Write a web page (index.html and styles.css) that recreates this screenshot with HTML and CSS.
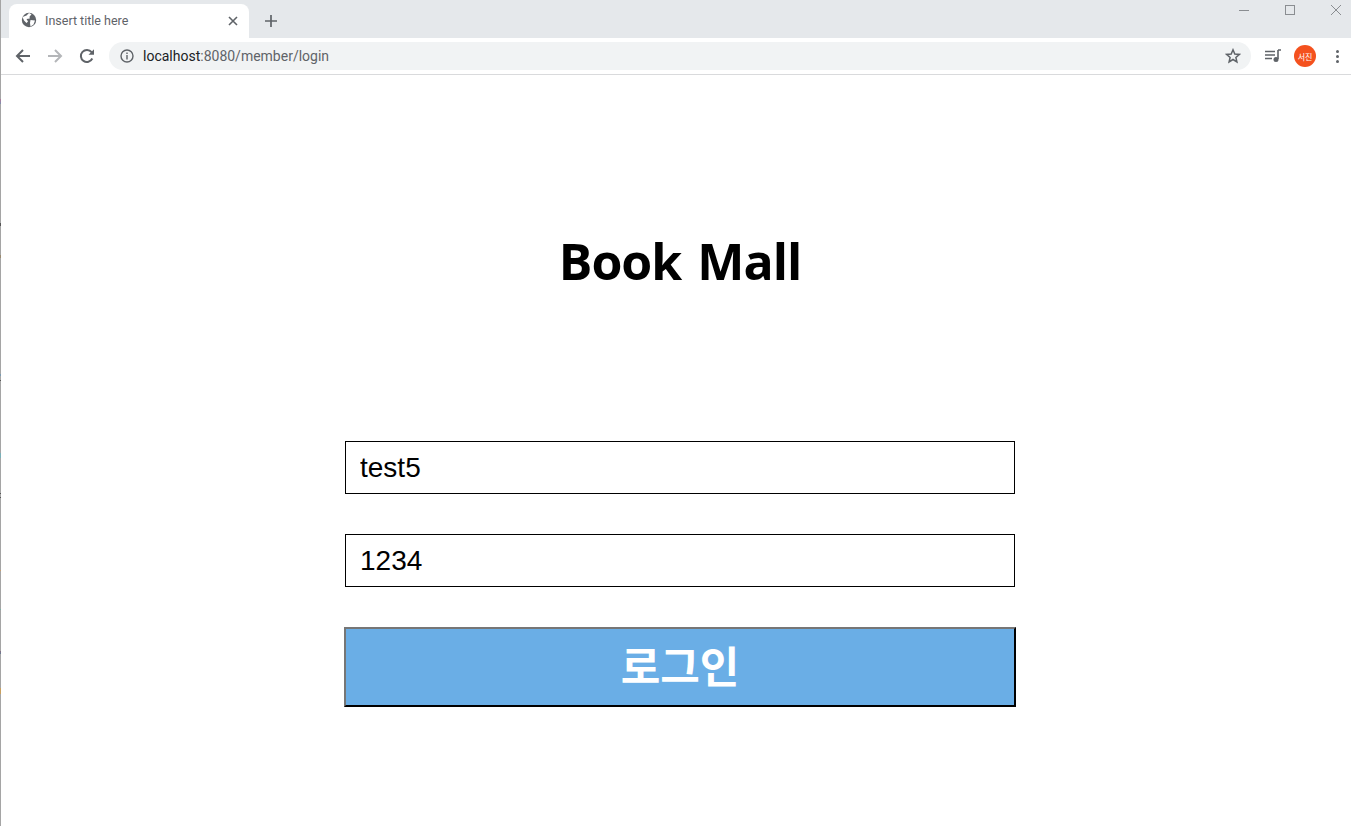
FILE: index.html
```html
<!DOCTYPE html>
<html lang="ko">
<head>
    <meta charset="UTF-8">
    <title>Insert title here</title>
    <link rel="stylesheet" href="styles.css">
</head>
<body>
    <div class="tabstrip">
        <div class="tab">
            <svg class="favicon" width="16" height="16" viewBox="0 0 16 16">
                <circle cx="8" cy="8" r="7.2" fill="#5f6368"/>
                <path d="M1.5 5 L5.5 3.5 L8 1 L10.5 2.2 L8.5 4.8 L8.8 6.6 L5.5 7 L7 9.5 L5.5 11 L3 8.5 Z M9.5 8 L14 8.5 L12.5 12.5 L9.5 14.5 L9 11 Z" fill="#fff"/>
            </svg>
            <span class="tab-title">Insert title here</span>
            <svg class="tab-close" width="10" height="10" viewBox="0 0 10 10">
                <path d="M1 1 L9 9 M9 1 L1 9" stroke="#5f6368" stroke-width="1.6"/>
            </svg>
        </div>
        <svg class="new-tab" width="12" height="12" viewBox="0 0 12 12">
            <path d="M6 0 V12 M0 6 H12" stroke="#5f6368" stroke-width="1.7"/>
        </svg>
        <div class="window-btns">
            <svg width="12" height="12" viewBox="0 0 12 12"><path d="M1 6.5 H11" stroke="#8a8d91"/></svg>
            <svg width="12" height="12" viewBox="0 0 12 12"><rect x="1.5" y="1.5" width="9" height="9" fill="none" stroke="#8a8d91"/></svg>
            <svg width="12" height="12" viewBox="0 0 12 12"><path d="M1 1 L11 11 M11 1 L1 11" stroke="#8a8d91"/></svg>
        </div>
    </div>

    <div class="toolbar">
        <svg class="nav-icon" width="16" height="16" viewBox="0 0 16 16">
            <path d="M15 8 H2 M8 2 L2 8 L8 14" fill="none" stroke="#5f6368" stroke-width="2"/>
        </svg>
        <svg class="nav-icon" width="16" height="16" viewBox="0 0 16 16">
            <path d="M1 8 H14 M8 2 L14 8 L8 14" fill="none" stroke="#b4b6b9" stroke-width="2"/>
        </svg>
        <svg class="nav-icon" width="16" height="16" viewBox="0 0 16 16">
            <path d="M13.3 10.5 A6 6 0 1 1 12.6 4.2" fill="none" stroke="#5f6368" stroke-width="2"/>
            <path d="M9.5 6.8 H15 V1.3 Z" fill="#5f6368"/>
        </svg>
        <div class="omnibox">
            <svg class="info-icon" width="14" height="14" viewBox="0 0 14 14">
                <circle cx="7" cy="7" r="6" fill="none" stroke="#5f6368" stroke-width="1.4"/>
                <path d="M7 6 V10.4 M7 3.6 V5" stroke="#5f6368" stroke-width="1.4"/>
            </svg>
            <span class="url"><span class="url-host">localhost</span>:8080/member/login</span>
            <svg class="star" width="16" height="16" viewBox="0 0 16 16">
                <path d="M8 1.8 L9.8 6 L14.3 6.4 L10.9 9.4 L11.9 13.9 L8 11.5 L4.1 13.9 L5.1 9.4 L1.7 6.4 L6.2 6 Z" fill="none" stroke="#5f6368" stroke-width="1.5"/>
            </svg>
        </div>
        <svg class="media-icon" width="16" height="14" viewBox="0 0 16 14">
            <path d="M0 2.5 H10 M0 6 H10 M0 9.5 H7" stroke="#5f6368" stroke-width="1.4"/>
            <path d="M13 1 H16 M13 1 V10" stroke="#5f6368" stroke-width="1.6"/>
            <circle cx="11" cy="10.5" r="2.5" fill="#5f6368"/>
        </svg>
        <div class="avatar">서진</div>
        <div class="menu-dots"><i></i><i></i><i></i></div>
    </div>

    <div class="login">
        <h1 class="title">Book Mall</h1>
        <form class="login-form">
            <input class="input" type="text" value="test5">
            <input class="input" type="text" value="1234">
            <button class="button" type="button">로그인</button>
        </form>
    </div>
</body>
</html>
```

FILE: styles.css
```css
* {
    margin: 0;
    padding: 0;
    box-sizing: border-box;
}
html, body {
    height: 100%;
    overflow: hidden;
}
body {
    font-family: "Liberation Sans", Arial, sans-serif;
    background-color: #ffffff;
    border-left: 1px solid #a5a5a5;
    /* bits of the window behind showing at the edge */
    border-image: linear-gradient(#a5a5a5 100px, #b07a9a 100px, #7a8fb0 105px, #a5a5a5 105px,
        #a5a5a5 223px, #555 223px, #555 226px, #a5a5a5 226px,
        #a5a5a5 255px, #9a8a70 255px, #9a8a70 258px, #a5a5a5 258px,
        #a5a5a5 374px, #7a9ab0 374px, #7a9ab0 376px, #a5a5a5 376px,
        #a5a5a5 380px, #555 380px, #555 381px, #a5a5a5 381px,
        #a5a5a5 453px, #7ab0b8 453px, #7ab0b8 458px, #a5a5a5 458px,
        #a5a5a5 493px, #555 493px, #555 494px, #a5a5a5 494px,
        #a5a5a5 497px, #555 497px, #555 498px, #a5a5a5 498px,
        #a5a5a5 570px, #c9a070 570px, #c9a070 571px, #a5a5a5 571px,
        #a5a5a5 609px, #7ab0a8 609px, #7ab0a8 610px, #a5a5a5 610px,
        #a5a5a5 650px, #8a6a80 650px, #6a7a90 653px, #a5a5a5 653px,
        #a5a5a5 687px, #c9a060 687px, #c9a060 693px, #a5a5a5 693px) 1;
}

/* browser top */
.tabstrip {
    height: 38px;
    background-color: #e5e8eb;
    display: flex;
    align-items: flex-end;
    padding-left: 8px;
}
.tab {
    width: 240px;
    height: 34px;
    background-color: #ffffff;
    border-radius: 8px 8px 0 0;
    display: flex;
    align-items: center;
    padding: 0 11px 0 12px;
}
.tab-title {
    flex: 1;
    margin-left: 8px;
    margin-bottom: 2px;
    font-family: Roboto, sans-serif;
    font-size: 12.5px;
    color: #5f6368;
}
.favicon {
    margin-bottom: 3px;
}
.tab-close {
    margin-bottom: 1px;
}
.new-tab {
    margin: 0 0 11px 16px;
}
.window-btns {
    margin-left: auto;
    align-self: flex-start;
    display: flex;
    gap: 34px;
    padding: 4px 9px 0 0;
}

.toolbar {
    height: 37px;
    background-color: #ffffff;
    border-bottom: 1px solid #d9dadc;
    display: flex;
    align-items: center;
    padding-left: 14px;
}
.nav-icon {
    margin-right: 16px;
}
.omnibox {
    width: 1142px;
    height: 28px;
    margin-left: -2px;
    background-color: #f1f3f4;
    border-radius: 14px;
    display: flex;
    align-items: center;
    padding: 0 10px 0 11px;
}
.info-icon {
    flex: none;
}
.url {
    flex: 1;
    margin-left: 9px;
    font-family: Roboto, sans-serif;
    font-size: 14px;
    color: #5f6368;
}
.url-host {
    color: #202124;
}
.media-icon {
    margin-left: 14px;
}
.avatar {
    width: 22px;
    height: 22px;
    margin-left: 13px;
    border-radius: 50%;
    background-color: #f4511e;
    color: #ffffff;
    font-family: "Noto Sans CJK KR", sans-serif;
    font-size: 8px;
    display: flex;
    align-items: center;
    justify-content: center;
}
.menu-dots {
    margin-left: 20px;
    display: flex;
    flex-direction: column;
    gap: 2px;
}
.menu-dots i {
    display: block;
    width: 3px;
    height: 3px;
    border-radius: 50%;
    background-color: #5f6368;
}

/* page */
.login {
    width: 670px;
    margin-left: 344px;
}
.title {
    margin-top: 150px;
    font-family: "Open Sans", sans-serif;
    font-size: 50px;
    line-height: 72px;
    font-weight: bold;
    letter-spacing: -1px;
    word-spacing: 4px;
    color: #000000;
    text-align: center;
}
.login-form {
    margin-top: 144px;
    display: flex;
    flex-direction: column;
    gap: 40px;
}
.input {
    width: 100%;
    height: 53px;
    padding: 0 14px;
    border: 1px solid #000000;
    font-family: "Liberation Sans", Arial, sans-serif;
    font-size: 28px;
    color: #000000;
    background-color: #ffffff;
    outline: none;
}
.button {
    width: calc(100% + 2px);
    height: 80px;
    margin-left: -1px;
    padding-bottom: 6px;
    border: 2px outset #000000;
    border-color: #767676 #222222 #222222 #767676;
    background-color: #6aaee6;
    color: #ffffff;
    font-family: "Noto Sans CJK KR", sans-serif;
    font-size: 43px;
    font-weight: bold;
    cursor: pointer;
}
```
